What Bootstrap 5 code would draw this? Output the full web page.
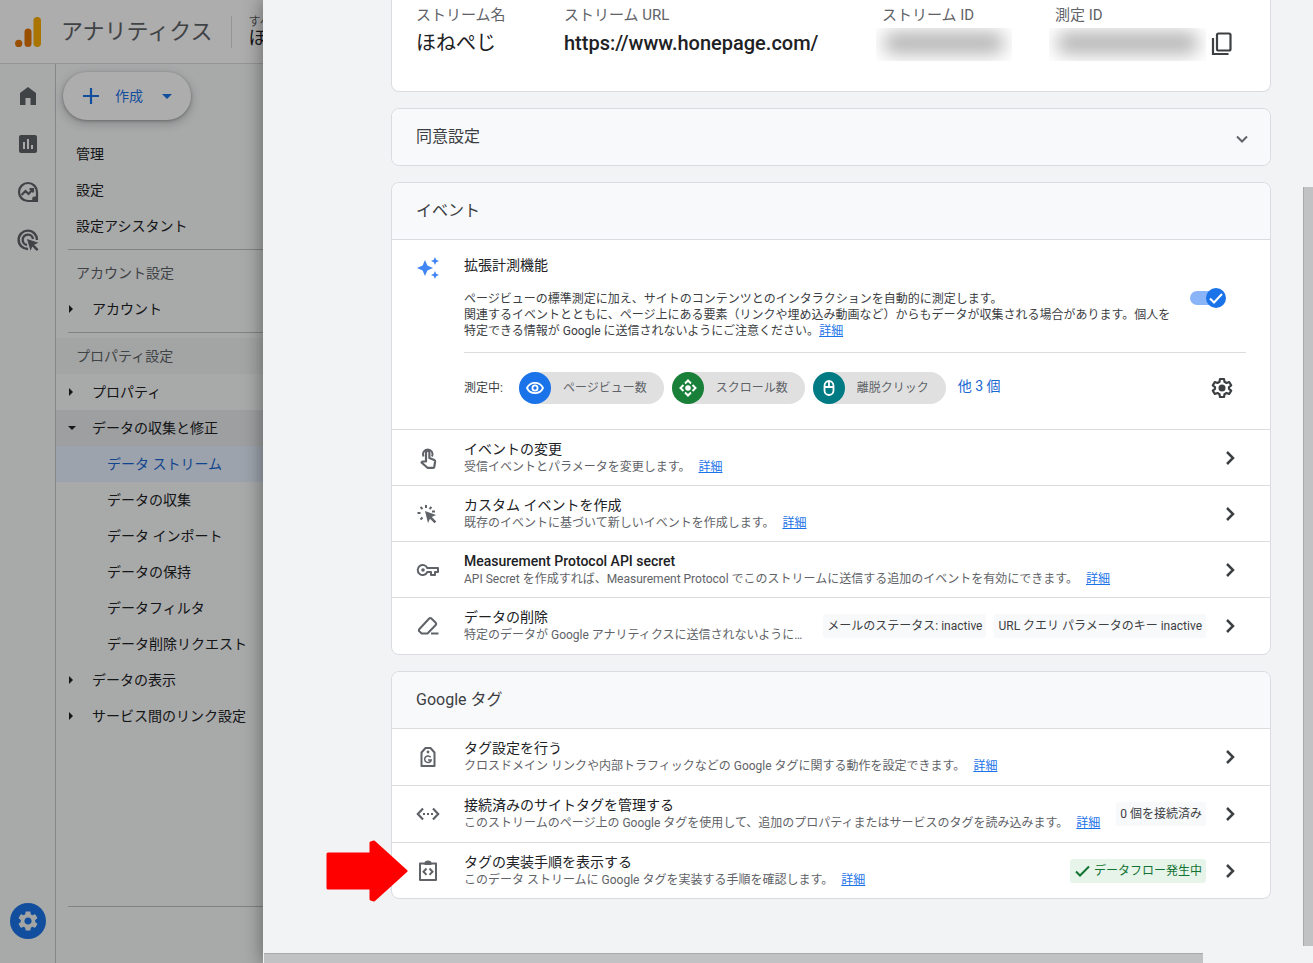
<!DOCTYPE html>
<html lang="ja">
<head>
<meta charset="utf-8">
<meta name="viewport" content="width=device-width, initial-scale=1">
<title>アナリティクス</title>
<link href="https://cdn.jsdelivr.net/npm/bootstrap@5.3.0/dist/css/bootstrap.min.css" rel="stylesheet">
<style>
  body{font-family:Roboto,"Noto Sans CJK JP",sans-serif;font-size:14px;line-height:18px;color:#202124;background:#f1f3f4}
  svg{display:block;flex:none}
  a{color:#1a73e8}
  .plain{background:none;border:0;padding:0;color:inherit;display:block}
  /* dimmed application behind the panel */
  .backapp{width:263px;flex:none;overflow:hidden;background:#f8f9fa}
  .backapp::after{content:"";position:absolute;inset:0;background:rgba(0,0,0,.32);pointer-events:none}
  .topbar{height:64px;background:#fff;border-bottom:1px solid #dadce0;padding-left:14px;white-space:nowrap}
  .brand-name{font-size:22px;line-height:32px;color:#5f6368;margin-left:17px}
  .account{border-left:1px solid #dadce0;margin-left:18px;padding-left:17px;height:32px}
  .account-top{font-size:12px;line-height:12px;color:#5f6368}
  .account-name{font-size:18px;line-height:20px}
  .rail{width:56px;flex:none;border-right:1px solid #c4c7cb;padding:8px 0 24px;color:#5f6368}
  .rail-btn{width:55px;height:48px;display:flex;align-items:center;justify-content:center}
  .rail-admin{width:36px;height:36px;border-radius:50%;background:#1a73e8;color:#f1f3f4}
  .create{width:128px;height:48px;margin:8px 0 16px 7px;background:#fff;border:0;border-radius:24px;color:#1a73e8;box-shadow:0 1px 3px rgba(60,64,67,.4),0 3px 8px 2px rgba(60,64,67,.2);padding:0 16px}
  .side a{display:flex;align-items:center;height:36px;color:#202124;text-decoration:none;white-space:nowrap;padding-left:20px}
  .side .group{height:36px;line-height:36px;padding-left:20px;color:#5f6368}
  .side .group.tinted{background:#f1f3f4}
  .side a.branch{padding-left:12px;gap:16px}
  .side a.leaf{padding-left:51px}
  .side a.open{background:#e8eaed}
  .side a.current{background:#e8f0fe;color:#1967d2}
  .side hr,.foot-rule{margin:5px 0 5px 12px;border:0;border-top:1px solid #bdc1c6;opacity:1}
  .foot-rule{margin-bottom:56px}
  /* sliding panel */
  .panel{background:#f1f3f4;padding:0 42px 64px 128px;box-shadow:0 0 18px 1px rgba(0,0,0,.4);min-width:0}
  .panel-card{background:#fff;border:1px solid #dadce0;border-radius:8px;margin-bottom:16px}
  .summary{border-top:0;border-radius:0 0 8px 8px;padding:4px 24px 30px;grid-template-columns:148fr 318fr 173fr 191fr}
  .summary dt{font-weight:400;font-size:15px;line-height:22px;color:#5f6368}
  .summary dd{margin:0;font-size:20px;line-height:35px;white-space:nowrap}
  .summary .site{font-weight:500}
  .redacted{height:33px;overflow:hidden;margin:2px 0 0 -6px;padding:4px 8px}
  .redacted::before{content:"";display:block;height:22px;background:#b4b4b4;border-radius:8px;filter:blur(9px)}
  .id-short{width:136px}
  .id-long{flex:1}
  .card-top{background:#f8f9fb;border-radius:8px 8px 0 0;height:56px;padding:0 20px 0 24px}
  .card-top.alone{border-radius:8px}
  .card-top h2{font-size:16px;line-height:24px;font-weight:400;margin:0;color:#3c4043}
  .measure{border-top:1px solid #dadce0;padding:16px 24px 25px;gap:24px}
  .measure h3,.entry h3{font-size:14px;line-height:18px;font-weight:500;margin:0}
  .jp h3,.jp{font-weight:400}
  .measure p{font-size:12px;line-height:16px;margin:17px 0 0;color:#3c4043}
  .toggle{appearance:none;width:36px;height:20px;margin:0 20px 0 0;border:0;background:url("data:image/svg+xml,%3Csvg xmlns='http://www.w3.org/2000/svg' viewBox='0 0 36 20'%3E%3Crect y='3' width='34' height='14' rx='7' fill='%238ab4f8'/%3E%3Ccircle cx='26' cy='10' r='10' fill='%231a73e8'/%3E%3Cpath d='M20 10.500l4 4 8-8.500' fill='none' stroke='%23fff' stroke-width='2'/%3E%3C/svg%3E")}
  .chips{border-top:1px solid #dadce0;margin-top:13px;padding-top:19px;font-size:12px;color:#3c4043}
  .chip{height:32px;border-radius:16px;background:#e0e0e0;color:#5f6368;padding-right:17px;gap:12px}
  .dot{width:32px;height:32px;border-radius:50%;color:#fff}
  .dot-view{background:#1a73e8}
  .dot-scroll{background:#188038}
  .dot-click{background:#007b83}
  .more{font-size:14px;color:#1967d2;text-decoration:none;padding-bottom:4px}
  .entry{border-top:1px solid #dadce0;height:56px;padding:0 28px 0 24px;color:#5f6368}
  .entry.tall{height:57px}
  .entry h3{color:#202124}
  .entry p{font-size:12px;line-height:18px;margin:0;white-space:nowrap}
  .note{font-size:12px;line-height:24px;background:#f8f9fa;color:#3c4043;border-radius:3px;padding:0 4px;white-space:nowrap}
  .note.good{background:#e6f4ea;color:#137333}
  .go{margin-left:12px;color:#3c4043}
  .pointer{left:-66px;top:50%;transform:translateY(-50%)}
  .bar-v{width:10px;right:0;top:187px;bottom:17px;background:#c1c2c4;border-left:1px solid #a8a9ab}
  .bar-h{height:10px;left:1px;right:110px;bottom:0;background:#c1c2c4;border-top:1px solid #a8a9ab}
</style>
</head>
<body>
<svg width="0" height="0" class="position-absolute" aria-hidden="true">
  <symbol id="chev" viewBox="0 0 24 24"><path d="M9 6l6 6-6 6" fill="none" stroke="currentColor" stroke-width="2.500"/></symbol>
  <symbol id="tri-r" viewBox="0 0 8 8"><path d="M1 0l4 4-4 4z" fill="currentColor"/></symbol>
  <symbol id="tri-d" viewBox="0 0 8 8"><path d="M0 2h8L4 6z" fill="currentColor"/></symbol>
  <symbol id="gear" viewBox="0 0 24 24"><path fill="currentColor" d="M19.140 12.940c.040-.300.060-.610.060-.940 0-.320-.020-.640-.070-.940l2.030-1.580c.180-.140.230-.410.120-.610l-1.920-3.320c-.120-.220-.370-.290-.590-.220l-2.390.960c-.500-.380-1.030-.700-1.620-.940l-.360-2.540c-.040-.240-.240-.410-.480-.410h-3.840c-.240 0-.430.170-.470.410l-.360 2.540c-.590.240-1.130.570-1.620.940l-2.390-.960c-.220-.080-.470 0-.590.220L2.740 8.870c-.120.210-.080.470.120.610l2.030 1.580c-.050.300-.090.630-.090.940s.020.640.070.940l-2.030 1.580c-.180.140-.230.410-.120.610l1.920 3.320c.120.220.370.290.590.220l2.390-.960c.500.380 1.030.700 1.620.940l.360 2.540c.050.240.240.410.480.410h3.840c.240 0 .440-.170.470-.410l.360-2.540c.590-.240 1.130-.560 1.620-.940l2.390.960c.220.080.470 0 .590-.220l1.920-3.320c.120-.220.070-.470-.120-.610l-2.010-1.580zM12 15.600c-1.980 0-3.600-1.620-3.600-3.600s1.620-3.600 3.600-3.600 3.600 1.620 3.600 3.600-1.620 3.600-3.600 3.600z"/></symbol>
</svg>

<div class="d-flex min-vh-100">
  <div class="backapp position-relative d-flex flex-column">
    <header class="topbar d-flex align-items-center">
      <svg width="30" height="32" viewBox="0 0 30 32" aria-hidden="true"><rect x="19.500" y="1" width="7.500" height="30" rx="3.700" fill="#f9ab00"/><rect x="10.500" y="12.500" width="7" height="18.500" rx="3.500" fill="#e37400"/><circle cx="4.700" cy="27.400" r="3.600" fill="#e37400"/></svg>
      <span class="brand-name">アナリティクス</span>
      <div class="account"><div class="account-top">すべて</div><div class="account-name">ほねぺじ</div></div>
    </header>
    <div class="d-flex flex-grow-1">
      <nav class="rail d-flex flex-column align-items-center" aria-label="メイン">
        <button class="plain rail-btn" aria-label="ホーム"><svg width="24" height="24" viewBox="0 0 24 24"><path fill="currentColor" d="M4 21V9l8-6 8 6v12h-5.500v-7h-5v7z"/></svg></button>
        <button class="plain rail-btn" aria-label="レポート"><svg width="24" height="24" viewBox="0 0 24 24"><path fill="currentColor" d="M19 3H5c-1.100 0-2 .900-2 2v14c0 1.100.900 2 2 2h14c1.100 0 2-.900 2-2V5c0-1.100-.900-2-2-2zM9 17H7v-7h2v7zm4 0h-2V7h2v10zm4 0h-2v-4h2v4z"/></svg></button>
        <button class="plain rail-btn" aria-label="探索"><svg width="24" height="24" viewBox="0 0 24 24"><path d="M12 3a9 9 0 1 0 0 18h9v-9a9 9 0 0 0-9-9z" fill="none" stroke="currentColor" stroke-width="2.200"/><path d="M16.500 17l4.500-1v5h-5z" fill="currentColor"/><path d="M5.500 15l4-4 3 3 4.500-5M13.500 9H17v3.500" fill="none" stroke="currentColor" stroke-width="2.200"/></svg></button>
        <button class="plain rail-btn" aria-label="広告"><svg width="24" height="24" viewBox="0 0 24 24"><path d="M12 21a9.200 9.200 0 1 1 9-9M11 17a5.200 5.200 0 1 1 6-6" fill="none" stroke="currentColor" stroke-width="2.400"/><path d="M11 11l11.500 3.800-4.400 2 4.400 4.400-1.800 1.800-4.400-4.400-1.800 4.200z" fill="currentColor"/></svg></button>
        <button class="plain rail-admin d-flex align-items-center justify-content-center mt-auto" aria-label="管理"><svg width="24" height="24"><use href="#gear"/></svg></button>
      </nav>
      <div class="flex-grow-1 d-flex flex-column">
        <button class="create d-flex align-items-center">
          <svg width="24" height="24" viewBox="0 0 24 24"><path d="M12 4v16M4 12h16" stroke="currentColor" stroke-width="2.200"/></svg>
          <span class="ms-2 ps-1">作成</span>
          <svg class="ms-auto" width="16" height="16" viewBox="0 0 16 16"><path d="M3 6h10l-5 5z" fill="currentColor"/></svg>
        </button>
        <nav class="side" aria-label="管理メニュー">
          <a href="#">管理</a>
          <a href="#">設定</a>
          <a href="#">設定アシスタント</a>
          <hr>
          <div class="group">アカウント設定</div>
          <a class="branch" href="#"><svg width="8" height="8"><use href="#tri-r"/></svg>アカウント</a>
          <hr>
          <div class="group tinted">プロパティ設定</div>
          <a class="branch" href="#"><svg width="8" height="8"><use href="#tri-r"/></svg>プロパティ</a>
          <a class="branch open" href="#"><svg width="8" height="8"><use href="#tri-d"/></svg>データの収集と修正</a>
          <a class="leaf current" href="#">データ ストリーム</a>
          <a class="leaf" href="#">データの収集</a>
          <a class="leaf" href="#">データ インポート</a>
          <a class="leaf" href="#">データの保持</a>
          <a class="leaf" href="#">データフィルタ</a>
          <a class="leaf" href="#">データ削除リクエスト</a>
          <a class="branch" href="#"><svg width="8" height="8"><use href="#tri-r"/></svg>データの表示</a>
          <a class="branch" href="#"><svg width="8" height="8"><use href="#tri-r"/></svg>サービス間のリンク設定</a>
        </nav>
        <hr class="foot-rule mt-auto">
      </div>
    </div>
  </div>

  <main class="panel position-relative flex-grow-1">
    <dl class="panel-card summary d-grid">
      <div><dt>ストリーム名</dt><dd>ほねぺじ</dd></div>
      <div><dt>ストリーム URL</dt><dd class="site">https://www.honepage.com/</dd></div>
      <div><dt>ストリーム ID</dt><dd><div class="redacted id-short"></div></dd></div>
      <div><dt>測定 ID</dt><dd class="d-flex align-items-center"><div class="redacted id-long"></div>
        <button class="plain ms-1 me-2" aria-label="コピー"><svg width="28" height="24" viewBox="0 0 28 24"><g fill="none" stroke="#3c4043" stroke-width="2.200"><rect x="7" y="1.500" width="13.500" height="17" rx="1.500"/><path d="M3 6v16h15.500"/></g></svg></button></dd></div>
    </dl>

    <section class="panel-card">
      <div class="card-top alone d-flex align-items-center justify-content-between">
        <h2>同意設定</h2>
        <button class="plain pt-1" aria-label="開く"><svg width="16" height="16" viewBox="0 0 16 16"><path d="M3 5.500l5 5 5-5" fill="none" stroke="#5f6368" stroke-width="2"/></svg></button>
      </div>
    </section>

    <section class="panel-card">
      <div class="card-top d-flex align-items-center"><h2>イベント</h2></div>
      <div class="measure jp d-flex">
        <svg width="24" height="24" viewBox="0 0 24 24" aria-hidden="true"><path fill="#4285f4" d="M9 4l2.400 5.600L17 12l-5.600 2.400L9 20l-2.400-5.600L1 12l5.600-2.400zM19 1l1.200 2.800L23 5l-2.800 1.200L19 9l-1.200-2.800L15 5l2.800-1.200zM19 15l1.200 2.800L23 19l-2.800 1.200L19 23l-1.200-2.800L15 19l2.800-1.200z"/></svg>
        <div class="flex-grow-1">
          <div class="d-flex align-items-center justify-content-between">
            <div>
              <h3 id="enh">拡張計測機能</h3>
              <p>ページビューの標準測定に加え、サイトのコンテンツとのインタラクションを自動的に測定します。<br>関連するイベントとともに、ページ上にある要素（リンクや埋め込み動画など）からもデータが収集される場合があります。個人を<br>特定できる情報が Google に送信されないようにご注意ください。<a href="#">詳細</a></p>
            </div>
            <input class="toggle" type="checkbox" role="switch" checked aria-labelledby="enh">
          </div>
          <div class="chips d-flex align-items-center gap-2">
            <span class="me-2">測定中:</span>
            <span class="chip d-flex align-items-center"><span class="dot dot-view d-flex align-items-center justify-content-center"><svg width="20" height="20" viewBox="0 0 20 20"><path d="M2 10c3.200-6.800 12.800-6.800 16 0-3.200 6.800-12.800 6.800-16 0z" fill="none" stroke="currentColor" stroke-width="1.800"/><circle cx="10" cy="10" r="2.600" fill="none" stroke="currentColor" stroke-width="1.800"/></svg></span>ページビュー数</span>
            <span class="chip d-flex align-items-center"><span class="dot dot-scroll d-flex align-items-center justify-content-center"><svg width="20" height="20" viewBox="0 0 20 20"><path d="M7 5.500l3-3 3 3M7 14.500l3 3 3-3M5.500 7l-3 3 3 3M14.500 7l3 3-3 3" fill="none" stroke="currentColor" stroke-width="2"/><circle cx="10" cy="10" r="2.800" fill="currentColor"/></svg></span>スクロール数</span>
            <span class="chip d-flex align-items-center"><span class="dot dot-click d-flex align-items-center justify-content-center"><svg width="20" height="20" viewBox="0 0 20 20"><path d="M5.500 8a4.500 5 0 0 1 9 0v4.500a4.500 4.500 0 0 1-9 0zM5.500 9h9M10 3v6" fill="none" stroke="currentColor" stroke-width="1.800"/></svg></span>離脱クリック</span>
            <a class="more ms-1" href="#">他 3 個</a>
            <button class="plain ms-auto me-2 pe-1" aria-label="設定"><svg width="24" height="24" viewBox="0 0 24 24"><g stroke="#3c4043" fill="none" stroke-width="2.200" stroke-linejoin="round"><path d="M10 3h4l.500 2.800 2 1.200 2.700-1 2 3.400-2.200 1.800v1.600l2.200 1.800-2 3.400-2.700-1-2 1.200L14 21h-4l-.500-2.800-2-1.200-2.700 1-2-3.400L5 12.800v-1.600L2.800 9.400l2-3.400 2.700 1 2-1.200z"/></g><circle cx="12" cy="12" r="3.500" fill="#3c4043"/></svg></button>
          </div>
        </div>
      </div>
      <div class="entry jp d-flex align-items-center">
        <svg width="24" height="24" viewBox="0 0 24 24" aria-hidden="true"><path d="M7.500 10.500a4.800 4.800 0 1 1 8.500 0" fill="none" stroke="currentColor" stroke-width="2"/><path d="M10 15.500V6.500a1.700 1.700 0 0 1 3.400 0v5.500l4.800 1.900c.800.300 1 .800.900 1.600l-.800 5.300c-.100.700-.600 1-1.300 1h-5.500L5.500 16.500l1-1z" fill="none" stroke="currentColor" stroke-width="2.200" stroke-linejoin="round"/></svg>
        <div class="ms-4"><h3>イベントの変更</h3><p>受信イベントとパラメータを変更します。<a class="ms-2" href="#">詳細</a></p></div>
        <button class="plain go ms-auto" aria-label="イベントの変更を開く"><svg width="24" height="24"><use href="#chev"/></svg></button>
      </div>
      <div class="entry jp d-flex align-items-center">
        <svg width="24" height="24" viewBox="0 0 24 24" aria-hidden="true"><path d="M9 9l11 4-4.200 2 4.500 4.500-1.800 1.800-4.500-4.500L12 21z" fill="currentColor"/><path d="M10 3v3M4.500 5l2 2M1.500 11h3M4.500 17.500l2-2M15.500 5l-2 2M16 9.500h3" fill="none" stroke="currentColor" stroke-width="2"/></svg>
        <div class="ms-4"><h3>カスタム イベントを作成</h3><p>既存のイベントに基づいて新しいイベントを作成します。<a class="ms-2" href="#">詳細</a></p></div>
        <button class="plain go ms-auto" aria-label="カスタム イベントを開く"><svg width="24" height="24"><use href="#chev"/></svg></button>
      </div>
      <div class="entry d-flex align-items-center">
        <svg width="24" height="24" viewBox="0 0 24 24" aria-hidden="true"><path d="M11.300 10a5 5 0 1 0 0 4H15v3h4v-3h3v-4z" fill="none" stroke="currentColor" stroke-width="2" stroke-linejoin="round"/><circle cx="7" cy="12" r="1.800" fill="currentColor"/></svg>
        <div class="ms-4"><h3>Measurement Protocol API secret</h3><p>API Secret を作成すれば、Measurement Protocol でこのストリームに送信する追加のイベントを有効にできます。<a class="ms-2" href="#">詳細</a></p></div>
        <button class="plain go ms-auto" aria-label="API secret を開く"><svg width="24" height="24"><use href="#chev"/></svg></button>
      </div>
      <div class="entry tall jp d-flex align-items-center">
        <svg width="24" height="24" viewBox="0 0 24 24" aria-hidden="true"><path d="M3 15.500L13.200 4.500a1.500 1.500 0 0 1 2.200 0l4.300 4.300a1.500 1.500 0 0 1 0 2.200L11.500 19.500H5.700L3 17z" fill="none" stroke="currentColor" stroke-width="2" stroke-linejoin="round"/><path d="M15 19.500h7.500" stroke="currentColor" stroke-width="2"/></svg>
        <div class="ms-4"><h3>データの削除</h3><p>特定のデータが Google アナリティクスに送信されないように…</p></div>
        <span class="note ms-auto">メールのステータス: inactive</span><span class="note ms-2">URL クエリ パラメータのキー inactive</span>
        <button class="plain go" aria-label="データの削除を開く"><svg width="24" height="24"><use href="#chev"/></svg></button>
      </div>
    </section>

    <section class="panel-card mb-0">
      <div class="card-top d-flex align-items-center"><h2>Google タグ</h2></div>
      <div class="entry tall jp d-flex align-items-center">
        <svg width="24" height="24" viewBox="0 0 24 24" aria-hidden="true"><path d="M5.500 21V7.500L9.500 3h5l4 4.500V21z" fill="none" stroke="currentColor" stroke-width="2" stroke-linejoin="round"/><circle cx="12" cy="7" r="1.400" fill="currentColor"/><path d="M14.700 12.300a3.300 3.300 0 1 0 .500 2.700H12" fill="none" stroke="currentColor" stroke-width="1.500"/></svg>
        <div class="ms-4"><h3>タグ設定を行う</h3><p>クロスドメイン リンクや内部トラフィックなどの Google タグに関する動作を設定できます。<a class="ms-2" href="#">詳細</a></p></div>
        <button class="plain go ms-auto" aria-label="タグ設定を開く"><svg width="24" height="24"><use href="#chev"/></svg></button>
      </div>
      <div class="entry tall jp d-flex align-items-center">
        <svg width="24" height="24" viewBox="0 0 24 24" aria-hidden="true"><path d="M7 6.500L1.800 12 7 17.500M17 6.500l5.200 5.500-5.200 5.500" fill="none" stroke="currentColor" stroke-width="2.200"/><path d="M7 11h2v2H7zM11 11h2v2h-2zM15 11h2v2h-2z" fill="currentColor"/></svg>
        <div class="ms-4"><h3>接続済みのサイトタグを管理する</h3><p>このストリームのページ上の Google タグを使用して、追加のプロパティまたはサービスのタグを読み込みます。<a class="ms-2" href="#">詳細</a></p></div>
        <span class="note ms-auto">0 個を接続済み</span>
        <button class="plain go" aria-label="接続済みのサイトタグを開く"><svg width="24" height="24"><use href="#chev"/></svg></button>
      </div>
      <div class="entry jp position-relative d-flex align-items-center">
        <svg class="pointer position-absolute" width="82" height="62" viewBox="0 0 82 62" aria-hidden="true"><path d="M2 14h43V3l3-1 32 29-32 29-3-1V48H2z" fill="red" stroke="red" stroke-width="3" stroke-linejoin="round"/></svg>
        <svg width="24" height="24" viewBox="0 0 24 24" aria-hidden="true"><path d="M4 4.500h16V21H4z" fill="none" stroke="currentColor" stroke-width="2" stroke-linejoin="round"/><path d="M8.500 4a3.500 2.500 0 0 1 7 0v2h-7z" fill="currentColor"/><path d="M10.500 9.500L7.500 12.700l3 3.200M13.500 9.500l3 3.200-3 3.200" fill="none" stroke="currentColor" stroke-width="2"/></svg>
        <div class="ms-4"><h3>タグの実装手順を表示する</h3><p>このデータ ストリームに Google タグを実装する手順を確認します。<a class="ms-2" href="#">詳細</a></p></div>
        <span class="note good ms-auto d-flex align-items-center"><svg class="me-1" width="16" height="16" viewBox="0 0 16 16"><path d="M2 8.500L6 12.500 15 3.500" fill="none" stroke="currentColor" stroke-width="2"/></svg>データフロー発生中</span>
        <button class="plain go" aria-label="タグの実装手順を開く"><svg width="24" height="24"><use href="#chev"/></svg></button>
      </div>
    </section>
    <div class="bar-v position-absolute"></div>
    <div class="bar-h position-absolute"></div>
  </main>
</div>
<script src="https://cdn.jsdelivr.net/npm/bootstrap@5.3.0/dist/js/bootstrap.bundle.min.js"></script>
</body>
</html>
